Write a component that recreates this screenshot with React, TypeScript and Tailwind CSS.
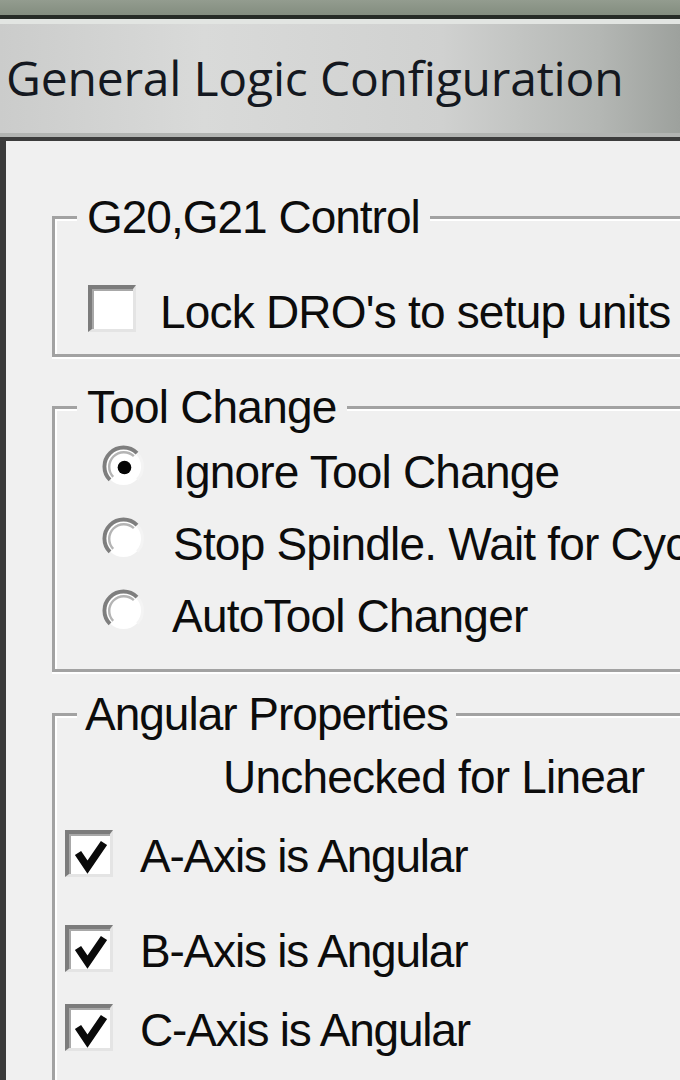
import React from "react";

const font = { fontFamily: '"Liberation Sans", Arial, sans-serif' };

function Checkbox({ checked }: { checked: boolean }) {
  return (
    <div className="relative h-[47px] w-[48px] shrink-0 border-t-[4px] border-l-[4px] border-t-[#7c7c7c] border-l-[#7c7c7c] border-r-[3px] border-b-[3px] border-r-[#e4e4e4] border-b-[#e4e4e4] bg-white shadow-[inset_2px_2px_0_#a8a8a8]">
      {checked && (
        <svg viewBox="0 0 41 40" className="absolute left-0 top-0 h-[40px] w-[41px]">
          <polyline points="9,19 18.5,33 35,9" fill="none" stroke="#0a0a0a" strokeWidth="7.5" strokeLinejoin="miter" strokeLinecap="butt" />
        </svg>
      )}
    </div>
  );
}

function Radio({ checked }: { checked: boolean }) {
  return (
    <svg viewBox="0 0 44 44" className="h-[43px] w-[43px] shrink-0">
      <circle cx="22" cy="22" r="19" fill="#ffffff" />
      <path d="M36.1 35.4 A19.5 19.5 0 0 0 36.1 8.6" fill="none" stroke="#f4f4f4" strokeWidth="3" />
      <path d="M8.2 35.8 A19.5 19.5 0 0 1 35.8 8.2" fill="none" stroke="#7e7e7e" strokeWidth="4" />
      <path d="M11.4 32.6 A15 15 0 0 1 32.6 11.4" fill="none" stroke="#b4b4b4" strokeWidth="2.5" />
      {checked && <circle cx="23" cy="23" r="7" fill="#050505" />}
    </svg>
  );
}

export default function App() {
  return (
    <div className="h-[1080px] w-[680px] overflow-hidden bg-[#f0f0f0]" style={font}>
      {/* window frame top */}
      <div className="h-[15px] bg-[linear-gradient(to_bottom,#939c8f,#838d7f)]" />
      <div className="h-[4px] bg-[#262b26]" />
      <div className="h-[5px] bg-[#e2e5e2]" />
      {/* title bar */}
      <div className="flex h-[109px] items-start bg-[linear-gradient(to_right,#cbcccb_0%,#d9dad9_30%,#d0d1d0_65%,#b4b7b4_88%,#9da19d_100%)] pl-[6px] pt-[22px]">
        <span
          className="text-[48px] leading-[64px] tracking-[-0.2px] text-[#141820]"
          style={{ fontFamily: '"Open Sans", "Noto Sans", sans-serif' }}
        >
          General Logic Configuration
        </span>
      </div>
      <div className="h-[4px] bg-[#b2b4b2]" />
      <div className="h-[4px] bg-[#3c3c3c]" />
      {/* content */}
      <div className="flex h-[940px]">
        <div className="w-[6px] shrink-0 bg-[#3a3a3a]" />
        <div className="flex-1 overflow-hidden bg-[#f0f0f0] pl-[46px] text-[46px] leading-[46px] tracking-[-0.8px] text-[#0c0c0c]">
          {/* G20,G21 Control */}
          <fieldset className="mt-[54px] w-[700px] border-[3px] border-[#a2a2a2] pb-[22px] shadow-[inset_2px_2px_0_#ffffff,0_2px_0_#ffffff]">
            <legend className="ml-[22px] bg-[#f0f0f0] px-[10px] leading-[44px] tracking-[-1px]">G20,G21 Control</legend>
            <div className="mt-[46px] flex h-[47px] items-center pl-[33px]">
              <Checkbox checked={false} />
              <span className="ml-[24px] mt-[6px] whitespace-nowrap">Lock DRO's to setup units</span>
            </div>
          </fieldset>

          {/* Tool Change */}
          <fieldset className="mt-[28px] w-[700px] border-[3px] border-[#a2a2a2] pb-[38px] shadow-[inset_2px_2px_0_#ffffff,0_2px_0_#ffffff]">
            <legend className="ml-[22px] bg-[#f0f0f0] px-[10px] leading-[44px]">Tool Change</legend>
            <div className="mt-[16px] flex flex-col gap-[30px] pl-[47px]">
              <div className="flex h-[42px] items-center">
                <Radio checked />
                <span className="ml-[28px] mt-[12px] whitespace-nowrap">Ignore Tool Change</span>
              </div>
              <div className="flex h-[42px] items-center">
                <Radio checked={false} />
                <span className="ml-[28px] mt-[12px] whitespace-nowrap">Stop Spindle. Wait for Cycle Start</span>
              </div>
              <div className="flex h-[42px] items-center">
                <Radio checked={false} />
                <span className="ml-[27px] mt-[12px] whitespace-nowrap">AutoTool Changer</span>
              </div>
            </div>
          </fieldset>

          {/* Angular Properties */}
          <fieldset className="mt-[20px] h-[500px] w-[700px] border-[3px] border-[#a2a2a2] shadow-[inset_2px_2px_0_#ffffff,0_2px_0_#ffffff]">
            <legend className="ml-[22px] bg-[#f0f0f0] px-[8px] leading-[44px] tracking-[-1px]">Angular Properties</legend>
            <div className="mt-[18px] pl-[168px] whitespace-nowrap">Unchecked for Linear</div>
            <div className="mt-[30px] flex h-[47px] items-center pl-[10px]">
              <Checkbox checked />
              <span className="ml-[27px] mt-[5px] whitespace-nowrap tracking-[-1.2px]">A-Axis is Angular</span>
            </div>
            <div className="mt-[48px] flex h-[47px] items-center pl-[10px]">
              <Checkbox checked />
              <span className="ml-[27px] mt-[5px] whitespace-nowrap tracking-[-1.2px]">B-Axis is Angular</span>
            </div>
            <div className="mt-[32px] flex h-[47px] items-center pl-[10px]">
              <Checkbox checked />
              <span className="ml-[27px] mt-[5px] whitespace-nowrap tracking-[-1.2px]">C-Axis is Angular</span>
            </div>
          </fieldset>
        </div>
      </div>
    </div>
  );
}
